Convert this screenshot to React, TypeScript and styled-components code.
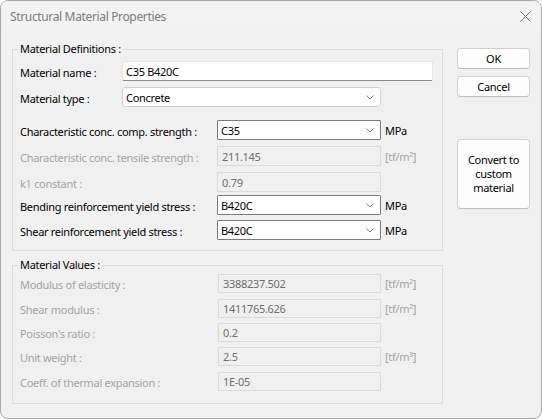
import React from "react";
import styled, { createGlobalStyle } from "styled-components";

const FONT = `"Noto Sans", "Liberation Sans", sans-serif`;

const GlobalStyle = createGlobalStyle`
  html, body { margin: 0; padding: 0; background: #ffffff; }
  body { font-family: ${FONT}; font-size: 11px; letter-spacing: -0.3px; color: #000; }
  * { box-sizing: border-box; }
`;

const Window = styled.div`
  width: 542px;
  height: 419px;
  border: 1px solid #a8a8a8;
  border-radius: 8px;
  background: #f0f0f0;
  overflow: hidden;
  display: flex;
  flex-direction: column;
`;

const TitleBar = styled.div`
  height: 30px;
  flex: none;
  background: #f3f3f3;
  display: flex;
  align-items: center;
  justify-content: space-between;
  padding: 0 10px 0 9px;
`;

const Title = styled.span`
  font-size: 12px;
  letter-spacing: -0.35px;
  color: #7a7a7a;
`;

const Body = styled.div`
  flex: 1;
  display: flex;
  padding: 0 0 0 11px;
`;

const Main = styled.div`
  width: 431px;
  display: flex;
  flex-direction: column;
  padding-top: 11px;
`;

const Group = styled.fieldset<{ $mt?: number; $pb: number }>`
  margin: ${(p) => p.$mt ?? 0}px 0 0 0;
  padding: 0 0 ${(p) => p.$pb}px 7px;
  border: 1px solid #dcdcdc;
  min-width: 0;
  display: flex;
  flex-direction: column;
`;

const Legend = styled.legend`
  padding: 0 2px;
  margin-left: -2px;
  line-height: 14px;
  height: 14px;
  color: #000;
`;

const Row = styled.div<{ $mt: number; $h?: number }>`
  display: flex;
  align-items: center;
  height: ${(p) => p.$h ?? 20}px;
  margin-top: ${(p) => p.$mt}px;
`;

const Label = styled.span<{ $w: number; $disabled?: boolean }>`
  width: ${(p) => p.$w}px;
  flex: none;
  white-space: nowrap;
  color: ${(p) => (p.$disabled ? "#a3a3a3" : "#000")};
  padding-top: 2px;
`;

const TextBox = styled.div<{ $w: number }>`
  width: ${(p) => p.$w}px;
  height: 100%;
  background: #ffffff;
  border: 1px solid #e4e4e4;
  border-bottom-color: #8a8a8a;
  border-radius: 2px;
  display: flex;
  align-items: center;
  padding-left: 3px;
`;

const Combo = styled.div<{ $w: number; $strong?: boolean }>`
  width: ${(p) => p.$w}px;
  height: 100%;
  background: #ffffff;
  border: 1px solid ${(p) => (p.$strong ? "#7a7a7a" : "#d0d0d0")};
  border-radius: ${(p) => (p.$strong ? 1 : 3)}px;
  display: flex;
  align-items: center;
  justify-content: space-between;
  padding: 0 6px 0 3px;
`;

const ReadOnly = styled.div<{ $w: number }>`
  width: ${(p) => p.$w}px;
  height: 100%;
  background: #f0f0f0;
  border: 1px solid #dadada;
  display: flex;
  align-items: center;
  padding-left: 4px;
  color: #6d6d6d;
`;

const Unit = styled.span<{ $disabled?: boolean }>`
  margin-left: 4px;
  color: ${(p) => (p.$disabled ? "#a3a3a3" : "#000")};
`;

const ButtonColumn = styled.div`
  margin-left: 14px;
  padding-top: 17px;
  width: 73px;
  display: flex;
  flex-direction: column;
`;

const Button = styled.button<{ $h: number; $mt: number }>`
  height: ${(p) => p.$h}px;
  margin-top: ${(p) => p.$mt}px;
  width: 100%;
  background: #fdfdfd;
  border: 1px solid #d0d0d0;
  border-bottom-color: #bdbdbd;
  border-radius: 4px;
  font-family: ${FONT};
  font-size: 11px;
  letter-spacing: -0.3px;
  line-height: 14px;
  color: #000;
  padding: 0;
`;

const Chevron = () => (
  <svg width="8" height="5" viewBox="0 0 8 5">
    <polyline points="0.5,0.5 4,4 7.5,0.5" fill="none" stroke="#6e6e6e" strokeWidth="0.9" />
  </svg>
);

const CloseIcon = () => (
  <svg width="11" height="11" viewBox="0 0 11 11">
    <path d="M0.5 0.5 L10.5 10.5 M10.5 0.5 L0.5 10.5" stroke="#707070" strokeWidth="1" fill="none" />
  </svg>
);

type ComboRowProps = { label: string; value: string; mt: number };

const ComboRow = ({ label, value, mt }: ComboRowProps) => (
  <Row $mt={mt}>
    <Label $w={197}>{label}</Label>
    <Combo $w={164} $strong>
      <span>{value}</span>
      <Chevron />
    </Combo>
    <Unit>MPa</Unit>
  </Row>
);

type ValueRowProps = { label: string; value: string; unit?: string; mt: number; h?: number };

const ValueRow = ({ label, value, unit, mt, h }: ValueRowProps) => (
  <Row $mt={mt} $h={h}>
    <Label $w={198} $disabled>{label}</Label>
    <ReadOnly $w={163}>{value}</ReadOnly>
    {unit && <Unit $disabled>{unit}</Unit>}
  </Row>
);

export default function App() {
  return (
    <>
      <GlobalStyle />
      <Window>
        <TitleBar>
          <Title>Structural Material Properties</Title>
          <CloseIcon />
        </TitleBar>
        <Body>
          <Main>
            <Group $pb={10}>
              <Legend>Material Definitions :</Legend>
              <Row $mt={5} $h={20}>
                <Label $w={102}>Material name :</Label>
                <TextBox $w={311}>C35 B420C</TextBox>
              </Row>
              <Row $mt={6}>
                <Label $w={102}>Material type :</Label>
                <Combo $w={259}>
                  <span>Concrete</span>
                  <Chevron />
                </Combo>
              </Row>
              <ComboRow label="Characteristic conc. comp. strength :" value="C35" mt={13} />
              <Row $mt={6} $h={20}>
                <Label $w={197} $disabled>Characteristic conc. tensile strength :</Label>
                <ReadOnly $w={164}>211.145</ReadOnly>
                <Unit $disabled>[tf/m²]</Unit>
              </Row>
              <Row $mt={6} $h={20}>
                <Label $w={197} $disabled>k1 constant :</Label>
                <ReadOnly $w={164}>0.79</ReadOnly>
              </Row>
              <ComboRow label="Bending reinforcement yield stress :" value="B420C" mt={3} />
              <ComboRow label="Shear reinforcement yield stress :" value="B420C" mt={5} />
            </Group>
            <Group $mt={7} $pb={12}>
              <Legend>Material Values :</Legend>
              <ValueRow label="Modulus of elasticity :" value="3388237.502" unit="[tf/m²]" mt={2} h={19} />
              <ValueRow label="Shear modulus :" value="1411765.626" unit="[tf/m²]" mt={6} h={19} />
              <ValueRow label="Poisson's ratio :" value="0.2" mt={5} h={19} />
              <ValueRow label="Unit weight :" value="2.5" unit="[tf/m³]" mt={5} h={19} />
              <ValueRow label="Coeff. of thermal expansion :" value="1E-05" mt={6} h={19} />
            </Group>
          </Main>
          <ButtonColumn>
            <Button $h={21} $mt={0}>OK</Button>
            <Button $h={21} $mt={7}>Cancel</Button>
            <Button $h={70} $mt={42}>
              Convert to
              <br />
              custom
              <br />
              material
            </Button>
          </ButtonColumn>
        </Body>
      </Window>
    </>
  );
}
